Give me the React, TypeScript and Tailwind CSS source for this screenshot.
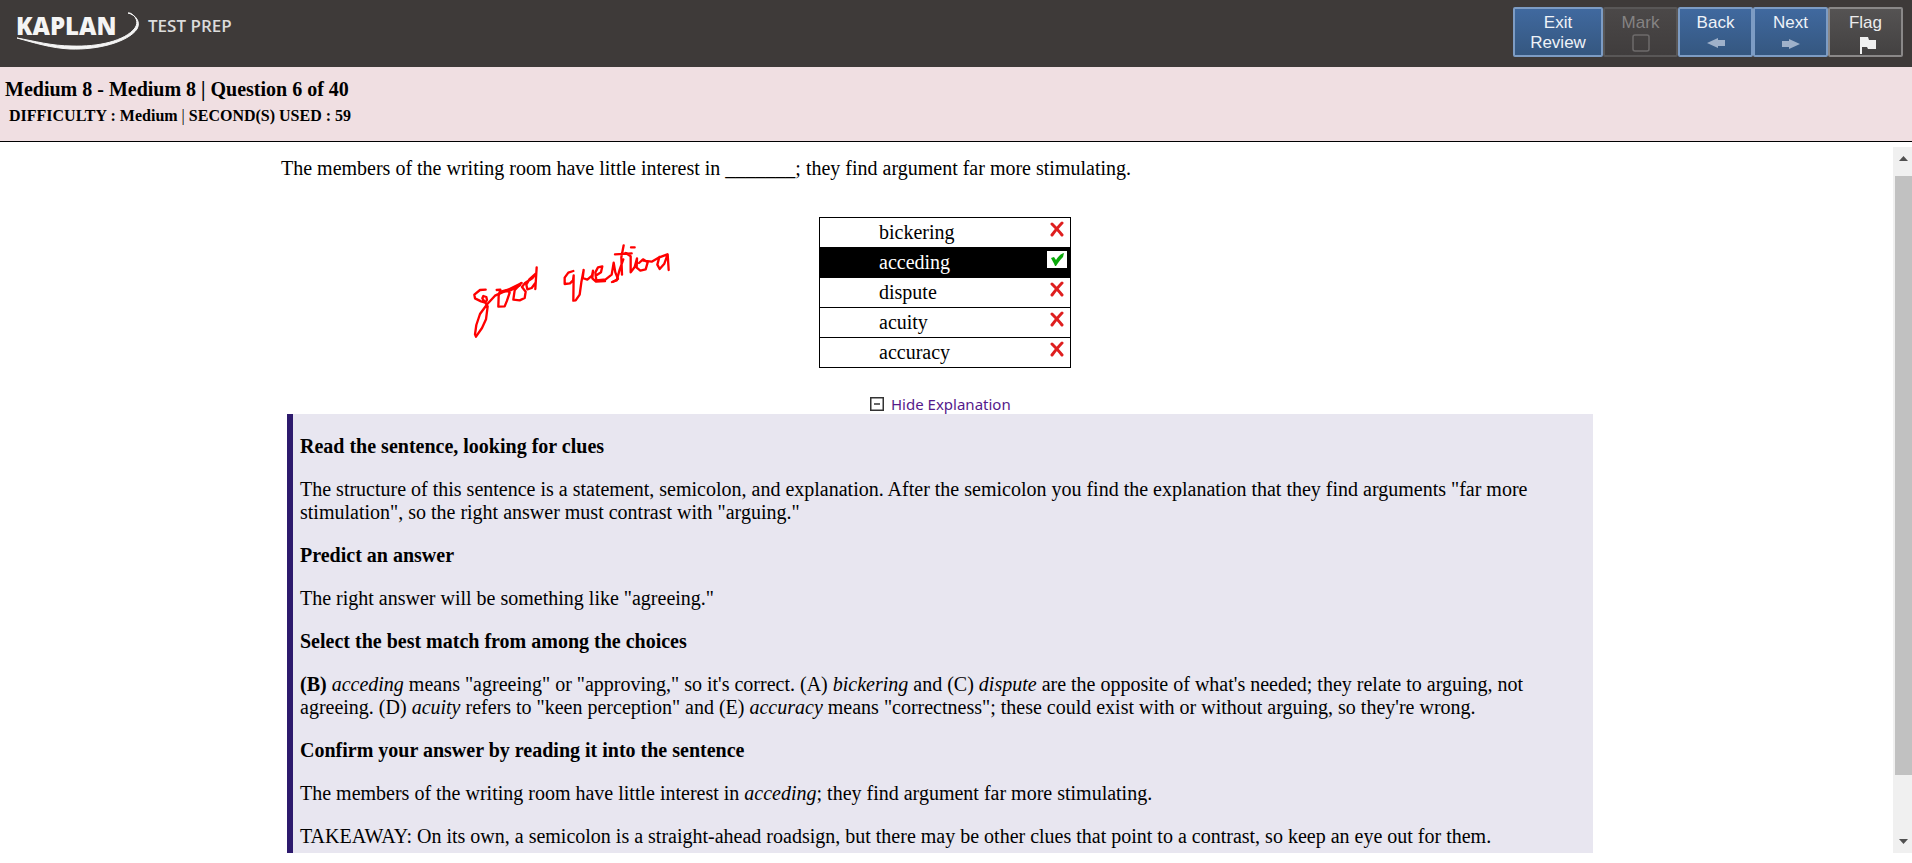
import type { ReactNode } from "react";

const choices = [
  { word: "bickering", correct: false },
  { word: "acceding", correct: true },
  { word: "dispute", correct: false },
  { word: "acuity", correct: false },
  { word: "accuracy", correct: false },
];

function Logo() {
  return (
    <div className="relative flex items-center gap-3 pt-2 pl-4 font-['Open_Sans',sans-serif] text-white">
      <span className="w-[120px] text-[24px] leading-9 font-extrabold text-[#f4f4f4]">KAPLAN</span>
      <span className="text-[17px] leading-9 font-semibold text-[#dcdcdc]">TEST PREP</span>
      <svg className="absolute top-3 left-4" width="126" height="40" viewBox="0 0 126 40" aria-hidden="true">
        <path
          d="M1 26C19 31 35 36 54 37C82 38 112 30 121 17C125 10 120 3 112 1L114 1C120 4 123 10 119 16C109 29 82 35 56 34C36 34 18 29 1 26Z"
          fill="#f4f4f4"
          stroke="#f4f4f4"
          strokeWidth="1"
        />
      </svg>
    </div>
  );
}

function ToolButton({ tone, label, children }: { tone: string; label: string; children?: ReactNode }) {
  return (
    <button
      type="button"
      disabled={label === "Mark"}
      className={`flex h-[50px] w-[75px] flex-col items-center rounded-[2px] border-2 pt-1 text-[17px] leading-5 ${tone}`}
    >
      <span>{label}</span>
      {children}
    </button>
  );
}

const blue = "border-[#7d9cc4] bg-linear-to-b from-[#40699f] to-[#355780] text-[#eef2f8]";

function Toolbar() {
  return (
    <nav className="flex pt-[7px] pr-[9px] font-['Liberation_Sans',Arial,sans-serif]">
      <button
        type="button"
        className={`h-[50px] w-[90px] rounded-[2px] border-2 px-3 pt-[2px] text-[17px] leading-5 ${blue}`}
      >
        Exit Review
      </button>
      <ToolButton label="Mark" tone="border-[#595757] bg-linear-to-b from-[#4b4848] to-[#403d3d] text-[#858383]">
        <svg width="18" height="18" viewBox="0 0 18 18" className="mt-px" aria-hidden="true">
          <rect x="1" y="1" width="16" height="16" rx="2" fill="none" stroke="#6d6b6b" strokeWidth="1.5" />
        </svg>
      </ToolButton>
      <ToolButton label="Back" tone={blue}>
        <svg width="18" height="10" viewBox="0 0 18 10" className="mt-[5px]" aria-hidden="true">
          <path d="M0 5L11 0V2H18V8H11V10Z" fill="#9fb1ca" />
        </svg>
      </ToolButton>
      <ToolButton label="Next" tone={blue}>
        <svg width="18" height="10" viewBox="0 0 18 10" className="mt-[6px]" aria-hidden="true">
          <path d="M18 5L7 0V2H0V8H7V10Z" fill="#9fb1ca" />
        </svg>
      </ToolButton>
      <ToolButton label="Flag" tone="border-[#8a8888] bg-linear-to-b from-[#555353] to-[#434141] text-[#ececec]">
        <svg width="16" height="17" viewBox="0 0 16 17" className="mt-1 ml-1 shrink-0" aria-hidden="true">
          <path d="M0 0H8L9 3H16V12H8L7 10H2V17H0Z" fill="#f0f0f0" />
        </svg>
      </ToolButton>
    </nav>
  );
}

function Mark({ correct }: { correct: boolean }) {
  return correct ? (
    <svg width="20" height="17" viewBox="0 0 20 17" role="img" aria-label="Correct">
      <rect width="20" height="17" fill="#fff" />
      <path d="M4 7L7 6L9 9C11 6 13 3 17 2L16 6C13 9 11 12 9 15H8C7 12 5 9 4 7Z" fill="#0aa80a" />
    </svg>
  ) : (
    <svg width="20" height="17" viewBox="0 0 20 17" role="img" aria-label="Incorrect">
      <path d="M5 3C8 6 12 10 15 14M15 2C11 6 8 10 5 14" fill="none" stroke="#de1f1f" strokeWidth="3" strokeLinecap="round" />
    </svg>
  );
}

function Choices() {
  return (
    <table className="mt-[37px] ml-[538px] w-[252px] border-collapse">
      <tbody>
        {choices.map((c) => (
          <tr key={c.word} className={c.correct ? "bg-black text-white" : ""}>
            <td className="h-[30px] border border-r-0 border-black pl-[59px]">{c.word}</td>
            <td className="w-8 border border-l-0 border-black pb-[6px] pl-2">
              <Mark correct={c.correct} />
            </td>
          </tr>
        ))}
      </tbody>
    </table>
  );
}

function Scribble() {
  return (
    <svg
      className="absolute top-[83px] left-[179px]"
      width="230"
      height="120"
      viewBox="0 0 690 360"
      fill="none"
      stroke="#f00"
      strokeWidth="7"
      strokeLinecap="round"
      strokeLinejoin="round"
      role="img"
      aria-label="good question"
    >
      <path d="M77 179L60 180L43 194L45 205L63 214L76 218L81 210L79 201L70 198L67 205L77 220L83 229L78 268L66 294L48 320L45 313L49 285L60 252L82 222L105 197L132 185L185 159" />
      <path d="M110 180L121 179L116 197L115 230L134 229L141 212L149 188L142 180L122 185L148 183L180 166" />
      <path d="M183 160L164 181L160 209L179 211L194 204L197 185L186 171L194 160L217 145L229 129L230 112L226 177M228 130L208 148L199 164L202 178L215 174L226 159" />
      <path d="M340 123L325 128L314 143L314 162L330 160L339 151L341 136L340 212L347 211L359 194L364 157L371 120L368 144L382 149L396 137L399 122L397 145L408 155L435 153" />
      <path d="M407 137L423 127L427 109L414 112L406 127L409 151L437 148L455 134L461 98L466 127L474 147L459 155" />
      <path d="M491 46L484 82L486 134M456 156L470 151L479 119L490 88M465 73L515 70M513 52H524M497 69L512 79L512 127L524 111L531 85L530 113L541 122L557 118L563 97L549 88L537 99M550 92L575 95L598 82L622 73M598 81L592 104L599 117L613 101L623 73L626 120" />
    </svg>
  );
}

function Explanation() {
  return (
    <section className="mr-[19px] ml-[6px] flex flex-col gap-5 border-l-6 border-[#2d1a6d] bg-[#e8e6f0] pt-[21px] pr-8 pb-[22px] pl-[7px]">
      <h2 className="font-bold">Read the sentence, looking for clues</h2>
      <p>
        The structure of this sentence is a statement, semicolon, and explanation. After the semicolon you find the
        explanation that they find arguments "far more stimulation", so the right answer must contrast with "arguing."
      </p>
      <h2 className="font-bold">Predict an answer</h2>
      <p>The right answer will be something like "agreeing."</p>
      <h2 className="font-bold">Select the best match from among the choices</h2>
      <p>
        <b>(B)</b> <i>acceding</i> means "agreeing" or "approving," so it's correct. (A) <i>bickering</i> and (C){" "}
        <i>dispute</i> are the opposite of what's needed; they relate to arguing, not agreeing. (D) <i>acuity</i> refers
        to "keen perception" and (E) <i>accuracy</i> means "correctness"; these could exist with or without arguing, so
        they're wrong.
      </p>
      <h2 className="font-bold">Confirm your answer by reading it into the sentence</h2>
      <p>
        The members of the writing room have little interest in <i>acceding</i>; they find argument far more
        stimulating.
      </p>
      <p>
        TAKEAWAY: On its own, a semicolon is a straight-ahead roadsign, but there may be other clues that point to a
        contrast, so keep an eye out for them.
      </p>
    </section>
  );
}

function ScrollTrack() {
  return (
    <div className="flex w-[19px] shrink-0 flex-col bg-[#f0f0f0]" aria-hidden="true">
      <svg width="19" height="29" viewBox="0 0 19 29" className="shrink-0">
        <path d="M6 14L10.500 9L15 14Z" fill="#505050" />
      </svg>
      <div className="flex-1">
        <div className="ml-[2px] h-[91%] bg-[#c1c1c1]" />
      </div>
      <svg width="19" height="19" viewBox="0 0 19 19" className="shrink-0">
        <path d="M6 5H15L10.500 10Z" fill="#505050" />
      </svg>
    </div>
  );
}

export default function App() {
  return (
    <div className="flex h-screen flex-col bg-white pb-[10px] font-['Liberation_Serif','Times_New_Roman',serif] text-black">
      <header className="flex h-[67px] shrink-0 items-start justify-between bg-[#3e3a39]">
        <Logo />
        <Toolbar />
      </header>
      <div className="h-[75px] shrink-0 border-b border-black bg-[#f0dfe2] pt-[10px] pl-[5px] font-bold">
        <h1 className="text-[20px] leading-6">Medium 8 - Medium 8 | Question 6 of 40</h1>
        <p className="pt-[5px] pl-1 text-[16px] leading-5">
          DIFFICULTY : Medium <span className="font-normal">|</span> SECOND(S) USED : 59
        </p>
      </div>
      <div className="mt-[5px] flex min-h-0 flex-1">
        <main className="min-w-0 flex-1 overflow-hidden text-[20px] leading-[23px]">
          <div className="relative mx-auto max-w-[1331px]">
            <p className="pt-[10px]">
              The members of the writing room have little interest in _______; they find argument far more stimulating.
            </p>
            <Choices />
            <Scribble />
            <a
              href="#explanation"
              className="mt-[26px] ml-[589px] flex h-5 w-fit items-center gap-[7px] font-['Noto_Sans',sans-serif] text-[15px] leading-5 text-[#551a8b]"
            >
              <svg width="14" height="14" viewBox="0 0 14 14" aria-hidden="true">
                <rect x="0.750" y="0.750" width="12.500" height="12.500" fill="none" stroke="#333" strokeWidth="1.500" />
                <path d="M4 7H10" stroke="#333" strokeWidth="1.500" />
              </svg>
              Hide Explanation
            </a>
            <div id="explanation">
              <Explanation />
            </div>
          </div>
        </main>
        <ScrollTrack />
      </div>
    </div>
  );
}
